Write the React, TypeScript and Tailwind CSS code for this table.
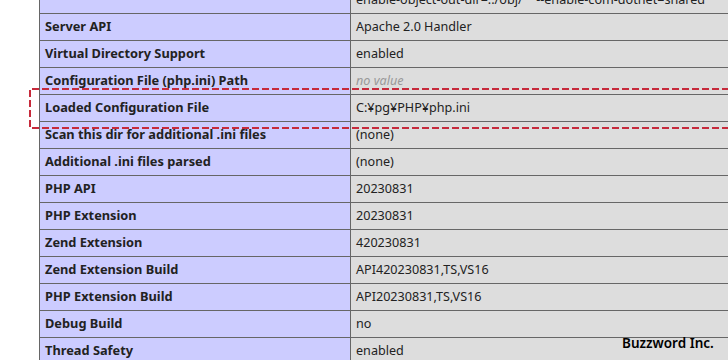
const rows: { name: string; value: string; empty?: boolean }[] = [
  {
    name: "",
    value: 'enable-object-out-dir=../obj/"  "--enable-com-dotnet=shared"',
  },
  { name: "Server API", value: "Apache 2.0 Handler" },
  { name: "Virtual Directory Support", value: "enabled" },
  { name: "Configuration File (php.ini) Path", value: "no value", empty: true },
  { name: "Loaded Configuration File", value: "C:¥pg¥PHP¥php.ini" },
  { name: "Scan this dir for additional .ini files", value: "(none)" },
  { name: "Additional .ini files parsed", value: "(none)" },
  { name: "PHP API", value: "20230831" },
  { name: "PHP Extension", value: "20230831" },
  { name: "Zend Extension", value: "420230831" },
  { name: "Zend Extension Build", value: "API420230831,TS,VS16" },
  { name: "PHP Extension Build", value: "API20230831,TS,VS16" },
  { name: "Debug Build", value: "no" },
  { name: "Thread Safety", value: "enabled" },
];

export default function App() {
  return (
    <div className="relative h-[360px] w-[728px] overflow-hidden bg-white font-['Noto_Sans',sans-serif] text-[#222]">
      {/* phpinfo table, first row cut off at the top */}
      <div className="-mt-[13px] ml-[39px] w-[800px]">
        {rows.map((row, index) => (
          <div key={index} className="flex border-b border-[#666]">
            <div className="h-[26px] w-[312px] shrink-0 overflow-hidden border-x border-[#666] bg-[#ccf] px-[5px] text-[12.8px] font-bold leading-[25px] whitespace-nowrap">
              {row.name}
            </div>
            <div className="h-[26px] flex-1 bg-[#ddd] px-[5px] text-[12.6px] leading-[25px] whitespace-nowrap">
              {row.empty ? (
                <i className="text-[#999]">{row.value}</i>
              ) : (
                row.value
              )}
            </div>
          </div>
        ))}
      </div>

      {/* highlight around the loaded config row */}
      <svg
        className="absolute left-[29px] top-[88px]"
        width="720"
        height="41"
        viewBox="0 0 720 41"
      >
        <path
          d="M720 1 H1 V40 H720"
          fill="none"
          stroke="#c62a3b"
          strokeWidth="2"
          strokeDasharray="7 3"
        />
      </svg>

      <div className="absolute left-[622px] top-[333px] text-[13.5px] font-semibold leading-[20px] text-black">
        Buzzword Inc.
      </div>
    </div>
  );
}
